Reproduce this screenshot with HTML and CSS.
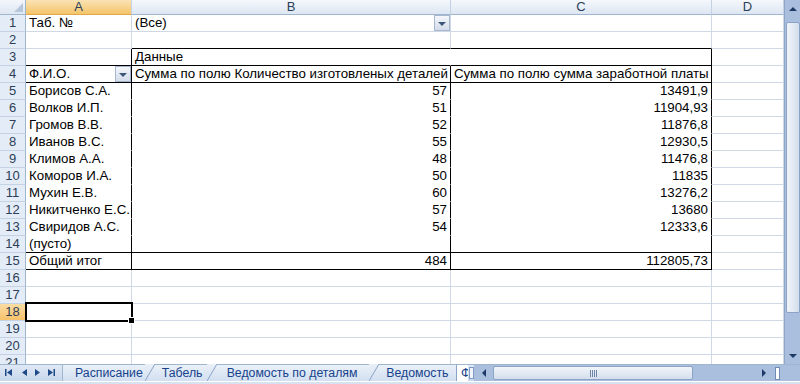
FILE: index.html
```html
<!DOCTYPE html>
<html lang="ru">
  <head>
    <meta charset="UTF-8" />
    <link rel="stylesheet" href="styles.css">
    <title>Сводная таблица</title>
  </head>
  <body>
    <div class="window">
      <div class="main">
        <div class="grid">
          <div class="corner"><span class="corner-mark"></span></div>
          <div class="h sel">A</div>
          <div class="h">B</div>
          <div class="h">C</div>
          <div class="h">D</div>

          <div class="r">1</div>
          <div class="c">Таб. №</div>
          <div class="c drop-cell">(Все)<span class="drop"><span class="arrow"></span></span></div>
          <div class="c"></div>
          <div class="c"></div>

          <div class="r">2</div>
          <div class="c"></div>
          <div class="c bb"></div>
          <div class="c bb"></div>
          <div class="c"></div>

          <div class="r">3</div>
          <div class="c bb br"></div>
          <div class="c bb nbr">Данные</div>
          <div class="c bb br"></div>
          <div class="c"></div>

          <div class="r">4</div>
          <div class="c bb br drop-cell">Ф.И.О.<span class="drop"><span class="arrow"></span></span></div>
          <div class="c bb br">Сумма по полю Количество изготовленых деталей</div>
          <div class="c bb br">Сумма по полю сумма заработной платы</div>
          <div class="c"></div>

          <div class="r">5</div>
          <div class="c br nbb">Борисов С.А.</div>
          <div class="c br nbb num">57</div>
          <div class="c br nbb num">13491,9</div>
          <div class="c"></div>

          <div class="r">6</div>
          <div class="c br nbb">Волков И.П.</div>
          <div class="c br nbb num">51</div>
          <div class="c br nbb num">11904,93</div>
          <div class="c"></div>

          <div class="r">7</div>
          <div class="c br nbb">Громов В.В.</div>
          <div class="c br nbb num">52</div>
          <div class="c br nbb num">11876,8</div>
          <div class="c"></div>

          <div class="r">8</div>
          <div class="c br nbb">Иванов В.С.</div>
          <div class="c br nbb num">55</div>
          <div class="c br nbb num">12930,5</div>
          <div class="c"></div>

          <div class="r">9</div>
          <div class="c br nbb">Климов А.А.</div>
          <div class="c br nbb num">48</div>
          <div class="c br nbb num">11476,8</div>
          <div class="c"></div>

          <div class="r">10</div>
          <div class="c br nbb">Коморов И.А.</div>
          <div class="c br nbb num">50</div>
          <div class="c br nbb num">11835</div>
          <div class="c"></div>

          <div class="r">11</div>
          <div class="c br nbb">Мухин Е.В.</div>
          <div class="c br nbb num">60</div>
          <div class="c br nbb num">13276,2</div>
          <div class="c"></div>

          <div class="r">12</div>
          <div class="c br nbb">Никитченко Е.С.</div>
          <div class="c br nbb num">57</div>
          <div class="c br nbb num">13680</div>
          <div class="c"></div>

          <div class="r">13</div>
          <div class="c br nbb">Свиридов А.С.</div>
          <div class="c br nbb num">54</div>
          <div class="c br nbb num">12333,6</div>
          <div class="c"></div>

          <div class="r">14</div>
          <div class="c br bb">(пусто)</div>
          <div class="c br bb"></div>
          <div class="c br bb"></div>
          <div class="c"></div>

          <div class="r">15</div>
          <div class="c br bb">Общий итог</div>
          <div class="c br bb num">484</div>
          <div class="c br bb num">112805,73</div>
          <div class="c"></div>

          <div class="r">16</div>
          <div class="c"></div><div class="c"></div><div class="c"></div><div class="c"></div>

          <div class="r">17</div>
          <div class="c"></div><div class="c"></div><div class="c"></div><div class="c"></div>

          <div class="r sel">18</div>
          <div class="c active"></div><div class="c"></div><div class="c"></div><div class="c"></div>

          <div class="r">19</div>
          <div class="c"></div><div class="c"></div><div class="c"></div><div class="c"></div>

          <div class="r">20</div>
          <div class="c"></div><div class="c"></div><div class="c"></div><div class="c"></div>

          <div class="r">21</div>
          <div class="c"></div><div class="c"></div><div class="c"></div><div class="c"></div>
        </div>

        <div class="vscroll">
          <div class="sbtn"><span class="tri-up"></span></div>
          <div class="vthumb"></div>
          <div class="sbtn vdown"><span class="tri-down"></span></div>
        </div>
      </div>

      <div class="bottombar">
        <div class="nav">
          <svg width="62" height="17" viewBox="0 0 62 17">
            <g fill="#1f4a8a">
              <rect x="5" y="5" width="1.5" height="7" />
              <polygon points="12,5 7,8.5 12,12" />
              <polygon points="27,5 22,8.5 27,12" />
              <polygon points="35,5 40,8.5 35,12" />
              <polygon points="48,5 53,8.5 48,12" />
              <rect x="53.5" y="5" width="1.5" height="7" />
            </g>
          </svg>
        </div>
        <div class="tabs">
          <div class="tab tab1">Расписание</div>
          <svg class="slant" width="10" height="17" viewBox="0 0 10 17"><line x1="0" y1="17" x2="10" y2="0" stroke="#8aa4c8" /></svg>
          <div class="tab tab2">Табель</div>
          <svg class="slant" width="10" height="17" viewBox="0 0 10 17"><line x1="0" y1="17" x2="10" y2="0" stroke="#8aa4c8" /></svg>
          <div class="tab tab3">Ведомость по деталям</div>
          <svg class="slant" width="10" height="17" viewBox="0 0 10 17"><line x1="0" y1="17" x2="10" y2="0" stroke="#8aa4c8" /></svg>
          <div class="tab tab4">Ведомость</div>
          <div class="tab tab5">Ф</div>
          <div class="split"></div>
        </div>
        <div class="hscroll">
          <div class="hbtn"><span class="tri-left"></span></div>
          <div class="hthumb"><span class="grip"></span></div>
          <div class="hbtn hright"><span class="tri-right"></span></div>
          <div class="hbox"></div>
        </div>
        <div class="bcorner"></div>
      </div>
      <div class="status"></div>
    </div>
  </body>
</html>
```

FILE: styles.css
```css
body {
  margin: 0;
  font-family: "Liberation Sans", Arial, sans-serif;
  background-color: white;
}

.window {
  width: 800px;
  height: 384px;
  overflow: hidden;
}

.main {
  display: flex;
  height: 364px;
}

.grid {
  width: 784px;
  height: 364px;
  overflow: hidden;
  display: grid;
  grid-template-columns: 26px 106px 319px 261px 72px;
  grid-template-rows: 15px;
  grid-auto-rows: 17px;
  font-size: 13.3px;
  line-height: 16px;
  color: black;
}

.c {
  box-sizing: border-box;
  border-right: 1px solid #d0d7e5;
  border-bottom: 1px solid #d0d7e5;
  padding: 0 2px 0 3px;
  white-space: nowrap;
  overflow: hidden;
}

.num {
  text-align: right;
  padding-right: 3px;
}

.bb {
  border-bottom-color: black;
}

.br {
  border-right-color: black;
}

.nbb {
  border-bottom-color: white;
}

.nbr {
  border-right-color: white;
}

.corner {
  box-sizing: border-box;
  border-right: 1px solid #9eb6ce;
  border-bottom: 1px solid #9eb6ce;
  background: linear-gradient(#f3f6fb, #dfe7f2);
  display: flex;
  align-items: flex-end;
  justify-content: flex-end;
  padding: 0 2px 2px 0;
}

.corner-mark {
  width: 0;
  height: 0;
  border-left: 9px solid transparent;
  border-bottom: 9px solid #b6c6dc;
}

.h {
  box-sizing: border-box;
  border-right: 1px solid #c5d2e3;
  border-bottom: 1px solid #9eb6ce;
  background: linear-gradient(#f5f8fc, #dde6f2);
  color: #2c3e58;
  text-align: center;
  font-size: 13px;
  line-height: 14px;
}

.r {
  box-sizing: border-box;
  border-right: 1px solid #9eb6ce;
  border-bottom: 1px solid #c5d2e3;
  background-color: #e4ecf7;
  color: #2c3e58;
  text-align: center;
  font-size: 13px;
}

.h.sel {
  background: linear-gradient(#fbe3b4, #f4c46a);
  border-bottom-color: #e0a94a;
}

.r.sel {
  background: linear-gradient(#fbdca4, #f6c26a);
  border-right-color: #e0a94a;
}

.drop-cell {
  display: flex;
  padding-right: 0;
}

.drop {
  margin-left: auto;
  box-sizing: border-box;
  width: 16px;
  height: 16px;
  border: 1px solid #a6b7cf;
  background: linear-gradient(#f4f6fa, #d3dcea);
  display: flex;
  align-items: center;
  justify-content: center;
}

.arrow {
  width: 0;
  height: 0;
  border-left: 4px solid transparent;
  border-right: 4px solid transparent;
  border-top: 4px solid #3d5578;
  margin-top: 1px;
}

.active {
  position: relative;
  overflow: visible;
}

.active::after {
  content: "";
  position: absolute;
  top: -2px;
  left: -1px;
  right: -2px;
  bottom: -2px;
  border: 2px solid black;
}

.active::before {
  content: "";
  position: absolute;
  right: -4px;
  bottom: -4px;
  width: 5px;
  height: 5px;
  background-color: black;
  border: 1px solid white;
  z-index: 1;
}

.vscroll {
  width: 16px;
  height: 364px;
  box-sizing: border-box;
  border-left: 1px solid #8ea7c9;
  background-color: #a9bfdd;
  display: flex;
  flex-direction: column;
}

.sbtn {
  height: 18px;
  display: flex;
  align-items: center;
  justify-content: center;
}

.vdown {
  margin-top: auto;
  height: 17px;
}

.vthumb {
  margin: 4px 0 0 1px;
  height: 291px;
  box-sizing: border-box;
  border: 1px solid #8aa3c7;
  border-radius: 2px;
  background: linear-gradient(90deg, #f1f5fa, #d3deec);
}

.tri-up {
  width: 0;
  height: 0;
  border-left: 4px solid transparent;
  border-right: 4px solid transparent;
  border-bottom: 4px solid #1d3a66;
}

.tri-down {
  width: 0;
  height: 0;
  border-left: 4px solid transparent;
  border-right: 4px solid transparent;
  border-top: 4px solid #1d3a66;
}

.tri-left {
  width: 0;
  height: 0;
  border-top: 4px solid transparent;
  border-bottom: 4px solid transparent;
  border-right: 4px solid #1d3a66;
}

.tri-right {
  width: 0;
  height: 0;
  border-top: 4px solid transparent;
  border-bottom: 4px solid transparent;
  border-left: 4px solid #1d3a66;
}

.bottombar {
  display: flex;
  height: 17px;
  box-sizing: border-box;
  border-top: 1px solid #9eb6ce;
  background: linear-gradient(#dfe8f5, #c8d7ec);
}

.nav {
  width: 62px;
  border-right: 1px solid #9eb6ce;
}

.nav svg {
  display: block;
  margin-top: -1px;
}

.tabs {
  display: flex;
  width: 411px;
  font-size: 12.3px;
  line-height: 16px;
  color: #15428b;
}

.tab {
  white-space: nowrap;
  overflow: hidden;
  background: linear-gradient(#eaf0f8, #d2dff0);
}

.tab1 {
  width: 82px;
  padding-left: 12px;
  box-sizing: border-box;
}

.tab2 {
  width: 52px;
  padding-left: 7px;
  box-sizing: border-box;
}

.tab3 {
  width: 153px;
  padding-left: 10px;
  box-sizing: border-box;
}

.tab4 {
  width: 78px;
  padding-left: 7px;
  box-sizing: border-box;
  border-right: 1px solid #8aa4c8;
}

.tab5 {
  width: 11px;
  padding-left: 4px;
  box-sizing: border-box;
  background: white;
}

.slant {
  display: block;
  margin-top: -1px;
  background: linear-gradient(#eaf0f8, #d2dff0);
}

.split {
  width: 5px;
  box-sizing: border-box;
  border: 1px solid #7f9bc3;
  background-color: #f2f6fb;
  margin: 2px 0 2px 1px;
}

.hscroll {
  flex: 1;
  display: flex;
  align-items: center;
  background-color: #a9bfdd;
}

.hbtn {
  width: 19px;
  display: flex;
  justify-content: center;
}

.hthumb {
  width: 200px;
  height: 14px;
  box-sizing: border-box;
  border: 1px solid #8aa3c7;
  border-radius: 2px;
  background: linear-gradient(#f1f5fa, #d3deec);
  display: flex;
  align-items: center;
  justify-content: center;
}

.grip {
  width: 7px;
  height: 7px;
  background: repeating-linear-gradient(90deg, #6f85a5 0 1px, transparent 1px 2px);
}

.hright {
  margin-left: auto;
}

.hbox {
  width: 3px;
  height: 11px;
  background-color: white;
  border: 1px solid #6f8bb5;
  margin: 0 4px 0 2px;
}

.bcorner {
  width: 16px;
  background-color: #a9bfdd;
}

.status {
  height: 3px;
  border-top: 1px solid #ffffff;
  background-color: #d7e2f1;
}
```
